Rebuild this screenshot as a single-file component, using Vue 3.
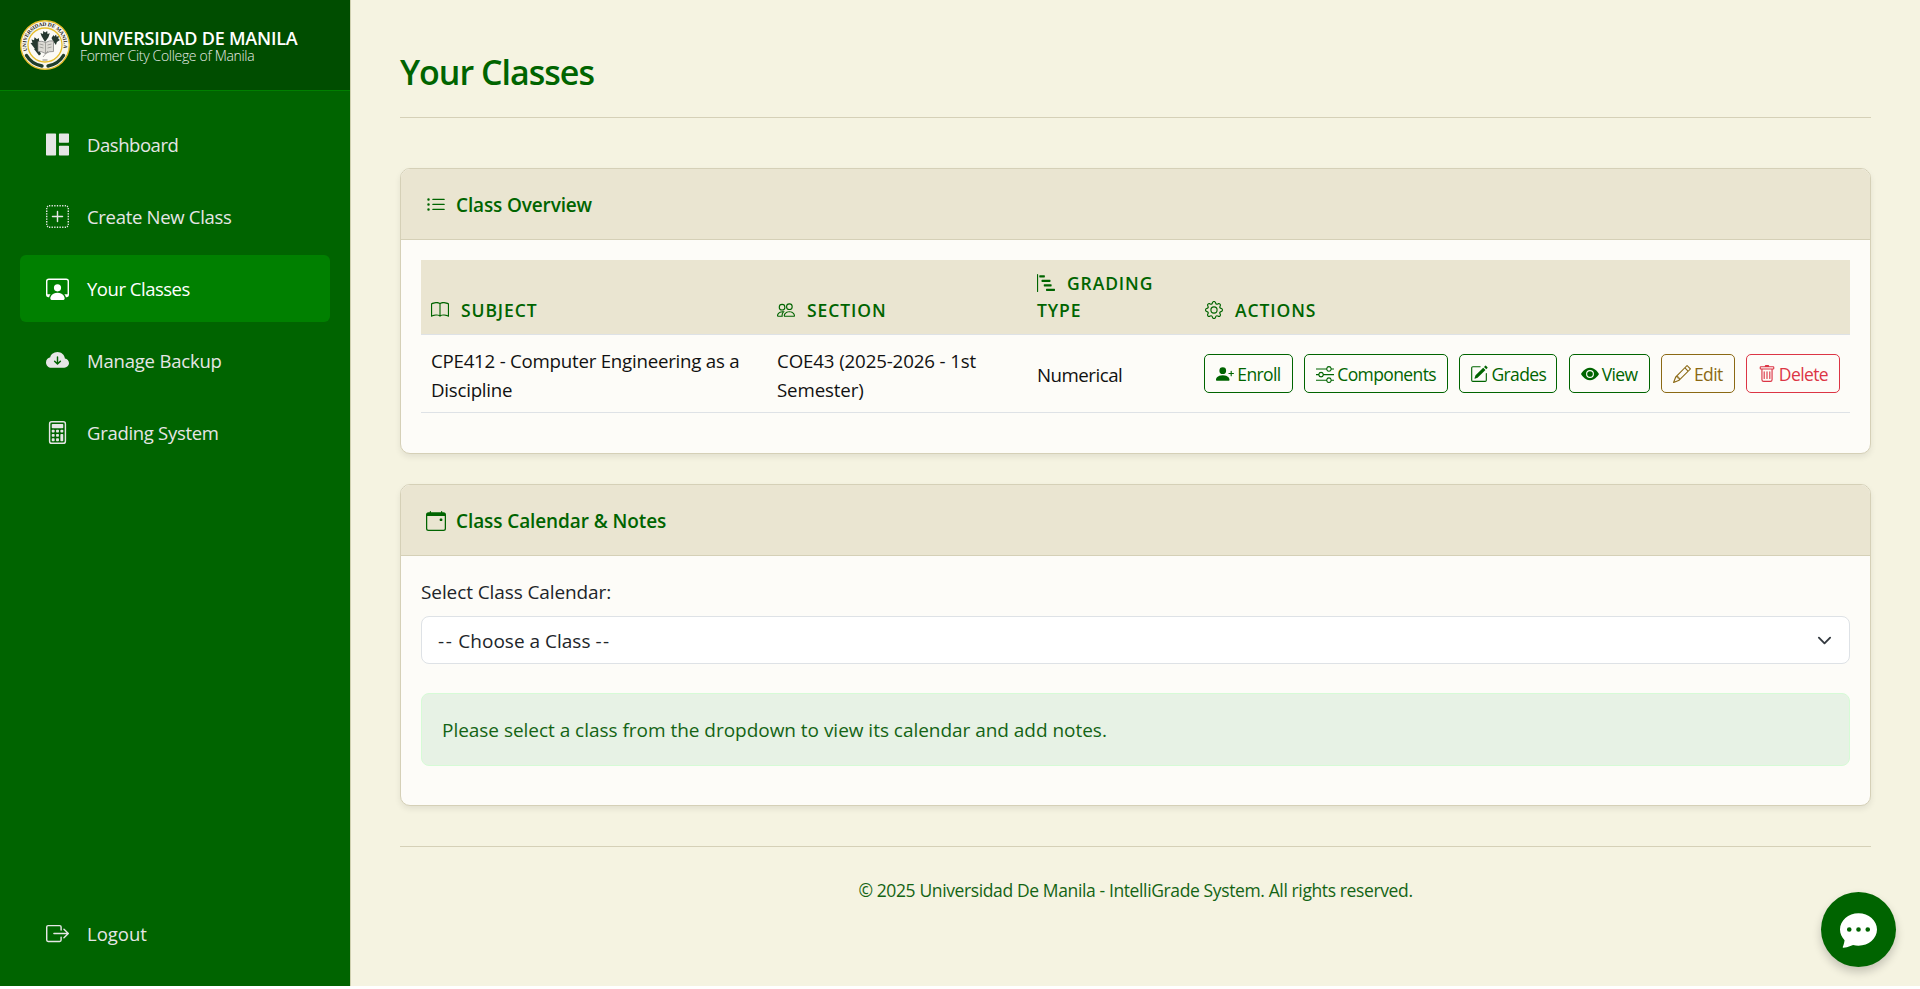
<script setup>
const icons = {
  columns: ['M.5.3h6a.5.5 0 0 1 .5.5v14.4a.5.5 0 0 1-.5.5h-6a.5.5 0 0 1-.5-.5V.8a.5.5 0 0 1 .5-.5M9.500.3h6a.5.5 0 0 1 .5.5v5.500a.5.5 0 0 1-.5.5h-6a.5.5 0 0 1-.5-.5V.8a.5.5 0 0 1 .5-.5M9.500 8.800h6a.5.5 0 0 1 .5.5v5.900a.5.5 0 0 1-.5.5h-6a.5.5 0 0 1-.5-.5V9.300a.5.5 0 0 1 .5-.5'],
  plusDotted: ['M2.5 0q-.25 0-.487.048l.194.98A1.5 1.5 0 0 1 2.5 1h.458V0zm2.292 0h-.917v1h.917zm1.833 0h-.917v1h.917zm1.833 0h-.916v1h.916zm1.834 0h-.917v1h.917zm1.833 0h-.917v1h.917zM13.5 0h-.458v1h.458q.151 0 .293.029l.194-.981A2.5 2.5 0 0 0 13.5 0m2.079 1.11a2.5 2.5 0 0 0-.69-.689l-.556.831q.248.167.415.415l.83-.556zM1.11.421a2.5 2.5 0 0 0-.689.69l.831.556c.11-.164.251-.305.415-.415zM16 2.5q0-.25-.048-.487l-.98.194q.027.141.028.293v.458h1zM.048 2.013A2.5 2.5 0 0 0 0 2.5v.458h1V2.5q0-.151.029-.293zM0 3.875v.917h1v-.917zm16 .917v-.917h-1v.917zM0 5.708v.917h1v-.917zm16 .917v-.917h-1v.917zM0 7.542v.916h1v-.916zm15 .916h1v-.916h-1zM0 9.375v.917h1v-.917zm16 .917v-.917h-1v.917zm-16 .916v.917h1v-.917zm16 .917v-.917h-1v.917zm-16 .917v.458q0 .25.048.487l.98-.194A1.5 1.5 0 0 1 1 13.5v-.458zm16 .458v-.458h-1v.458q0 .151-.029.293l.981.194Q16 13.75 16 13.5M.421 14.89c.183.272.417.506.69.689l.556-.831a1.5 1.5 0 0 1-.415-.415zm14.469.689c.272-.183.506-.417.689-.69l-.831-.556c-.11.164-.251.305-.415.415l.556.83zm-12.877.373Q2.25 16 2.5 16h.458v-1H2.5q-.151 0-.293-.029zM13.5 16q.25 0 .487-.048l-.194-.98A1.5 1.5 0 0 1 13.5 15h-.458v1zm-9.625 0h.917v-1h-.917zm1.833 0h.917v-1h-.917zm1.834-1v1h.916v-1zm1.833 1h.917v-1h-.917zm1.833 0h.917v-1h-.917zM8.5 4.5a.5.5 0 0 0-1 0v3h-3a.5.5 0 0 0 0 1h3v3a.5.5 0 0 0 1 0v-3h3a.5.5 0 0 0 0-1h-3z'],
  workspace: ['M4 16s-1 0-1-1 1-4 5-4 5 3 5 4-1 1-1 1zm4-5.95a2.5 2.5 0 1 0 0-5 2.5 2.5 0 0 0 0 5', 'M2 1a2 2 0 0 0-2 2v9.5A1.5 1.5 0 0 0 1.5 14h.653a5.4 5.4 0 0 1 1.066-2H1V3a1 1 0 0 1 1-1h12a1 1 0 0 1 1 1v9h-2.219c.554.654.89 1.373 1.066 2h.653a1.5 1.5 0 0 0 1.5-1.5V3a2 2 0 0 0-2-2z'],
  cloud: ['M8 2a5.53 5.53 0 0 0-3.594 1.342c-.766.66-1.321 1.52-1.464 2.383C1.266 6.095 0 7.555 0 9.318 0 11.366 1.708 13 3.781 13h8.906C14.502 13 16 11.57 16 9.773c0-1.636-1.242-2.969-2.834-3.194C12.923 3.999 10.69 2 8 2m2.354 6.854-2 2a.5.5 0 0 1-.708 0l-2-2a.5.5 0 1 1 .708-.708L7.5 9.293V5.5a.5.5 0 0 1 1 0v3.793l1.146-1.147a.5.5 0 0 1 .708.708'],
  calculator: ['M12 1a1 1 0 0 1 1 1v12a1 1 0 0 1-1 1H4a1 1 0 0 1-1-1V2a1 1 0 0 1 1-1zM4 0a2 2 0 0 0-2 2v12a2 2 0 0 0 2 2h8a2 2 0 0 0 2-2V2a2 2 0 0 0-2-2z', 'M4 2.5a.5.5 0 0 1 .5-.5h7a.5.5 0 0 1 .5.5v2a.5.5 0 0 1-.5.5h-7a.5.5 0 0 1-.5-.5zm0 4a.5.5 0 0 1 .5-.5h1a.5.5 0 0 1 .5.5v1a.5.5 0 0 1-.5.5h-1a.5.5 0 0 1-.5-.5zm0 3a.5.5 0 0 1 .5-.5h1a.5.5 0 0 1 .5.5v1a.5.5 0 0 1-.5.5h-1a.5.5 0 0 1-.5-.5zm0 3a.5.5 0 0 1 .5-.5h1a.5.5 0 0 1 .5.5v1a.5.5 0 0 1-.5.5h-1a.5.5 0 0 1-.5-.5zm3-6a.5.5 0 0 1 .5-.5h1a.5.5 0 0 1 .5.5v1a.5.5 0 0 1-.5.5h-1a.5.5 0 0 1-.5-.5zm0 3a.5.5 0 0 1 .5-.5h1a.5.5 0 0 1 .5.5v1a.5.5 0 0 1-.5.5h-1a.5.5 0 0 1-.5-.5zm0 3a.5.5 0 0 1 .5-.5h1a.5.5 0 0 1 .5.5v1a.5.5 0 0 1-.5.5h-1a.5.5 0 0 1-.5-.5zm3-6a.5.5 0 0 1 .5-.5h1a.5.5 0 0 1 .5.5v1a.5.5 0 0 1-.5.5h-1a.5.5 0 0 1-.5-.5zm0 3a.5.5 0 0 1 .5-.5h1a.5.5 0 0 1 .5.5v4a.5.5 0 0 1-.5.5h-1a.5.5 0 0 1-.5-.5z'],
  logout: ['M10 12.5a.5.5 0 0 1-.5.5h-8a.5.5 0 0 1-.5-.5v-9a.5.5 0 0 1 .5-.5h8a.5.5 0 0 1 .5.5v2a.5.5 0 0 0 1 0v-2A1.5 1.5 0 0 0 9.5 2h-8A1.5 1.5 0 0 0 0 3.5v9A1.5 1.5 0 0 0 1.5 14h8a1.5 1.5 0 0 0 1.5-1.5v-2a.5.5 0 0 0-1 0z', 'M15.854 8.354a.5.5 0 0 0 0-.708l-3-3a.5.5 0 0 0-.708.708L14.293 7.5H5.5a.5.5 0 0 0 0 1h8.793l-2.147 2.146a.5.5 0 0 0 .708.708z'],
  list: ['M5 11.5a.5.5 0 0 1 .5-.5h9a.5.5 0 0 1 0 1h-9a.5.5 0 0 1-.5-.5m0-4a.5.5 0 0 1 .5-.5h9a.5.5 0 0 1 0 1h-9a.5.5 0 0 1-.5-.5m0-4a.5.5 0 0 1 .5-.5h9a.5.5 0 0 1 0 1h-9a.5.5 0 0 1-.5-.5m-3 1a1 1 0 1 0 0-2 1 1 0 0 0 0 2m0 4a1 1 0 1 0 0-2 1 1 0 0 0 0 2m0 4a1 1 0 1 0 0-2 1 1 0 0 0 0 2'],
  calendar: ['M11 6.5a.5.5 0 0 1 .5-.5h1a.5.5 0 0 1 .5.5v1a.5.5 0 0 1-.5.5h-1a.5.5 0 0 1-.5-.5z', 'M3.5 0a.5.5 0 0 1 .5.5V1h8V.5a.5.5 0 0 1 1 0V1h1a2 2 0 0 1 2 2v11a2 2 0 0 1-2 2H2a2 2 0 0 1-2-2V3a2 2 0 0 1 2-2h1V.5a.5.5 0 0 1 .5-.5M1 4v10a1 1 0 0 0 1 1h12a1 1 0 0 0 1-1V4z'],
  book: ['M1 2.828c.885-.37 2.154-.769 3.388-.893 1.33-.134 2.458.063 3.112.752v9.746c-.935-.53-2.12-.603-3.213-.493-1.18.12-2.37.461-3.287.811zm7.5-.141c.654-.689 1.782-.886 3.112-.752 1.234.124 2.503.523 3.388.893v9.923c-.918-.35-2.107-.692-3.287-.81-1.094-.111-2.278-.039-3.213.492zM8 1.783C7.015.936 5.587.81 4.287.94c-1.514.153-3.042.672-3.994 1.105A.5.5 0 0 0 0 2.5v11a.5.5 0 0 0 .707.455c.882-.4 2.303-.881 3.68-1.02 1.409-.142 2.59.087 3.223.877a.5.5 0 0 0 .78 0c.633-.79 1.814-1.019 3.222-.877 1.378.139 2.8.62 3.681 1.02A.5.5 0 0 0 16 13.5v-11a.5.5 0 0 0-.293-.455c-.952-.433-2.48-.952-3.994-1.105C10.413.809 8.985.936 8 1.783'],
  gear: ['M8 4.754a3.246 3.246 0 1 0 0 6.492 3.246 3.246 0 0 0 0-6.492M5.754 8a2.246 2.246 0 1 1 4.492 0 2.246 2.246 0 0 1-4.492 0', 'M9.796 1.343c-.527-1.79-3.065-1.79-3.592 0l-.094.319a.873.873 0 0 1-1.255.52l-.292-.16c-1.64-.892-3.433.902-2.54 2.541l.159.292a.873.873 0 0 1-.52 1.255l-.319.094c-1.79.527-1.79 3.065 0 3.592l.319.094a.873.873 0 0 1 .52 1.255l-.16.292c-.892 1.64.901 3.434 2.541 2.54l.292-.159a.873.873 0 0 1 1.255.52l.094.319c.527 1.79 3.065 1.79 3.592 0l.094-.319a.873.873 0 0 1 1.255-.52l.292.16c1.64.893 3.434-.902 2.54-2.541l-.159-.292a.873.873 0 0 1 .52-1.255l.319-.094c1.79-.527 1.79-3.065 0-3.592l-.319-.094a.873.873 0 0 1-.52-1.255l.16-.292c.893-1.64-.902-3.433-2.541-2.54l-.292.159a.873.873 0 0 1-1.255-.52zm-2.633.283c.246-.835 1.428-.835 1.674 0l.094.319a1.873 1.873 0 0 0 2.693 1.115l.291-.16c.764-.415 1.6.42 1.184 1.185l-.159.292a1.873 1.873 0 0 0 1.116 2.692l.318.094c.835.246.835 1.428 0 1.674l-.319.094a1.873 1.873 0 0 0-1.115 2.693l.16.291c.415.764-.42 1.6-1.185 1.184l-.291-.159a1.873 1.873 0 0 0-2.693 1.116l-.094.318c-.246.835-1.428.835-1.674 0l-.094-.319a1.873 1.873 0 0 0-2.692-1.115l-.292.16c-.764.415-1.6-.42-1.184-1.185l.159-.291A1.873 1.873 0 0 0 1.945 8.93l-.319-.094c-.835-.246-.835-1.428 0-1.674l.319-.094A1.873 1.873 0 0 0 3.06 4.377l-.16-.292c-.415-.764.42-1.6 1.185-1.184l.292.159a1.873 1.873 0 0 0 2.692-1.115z'],
  enroll: ['M1 14s-1 0-1-1 1-4 6-4 6 3 6 4-1 1-1 1zm5-6a3 3 0 1 0 0-6 3 3 0 0 0 0 6', 'M13.5 5a.5.5 0 0 1 .5.5V7h1.5a.5.5 0 0 1 0 1H14v1.5a.5.5 0 0 1-1 0V8h-1.5a.5.5 0 0 1 0-1H13V5.5a.5.5 0 0 1 .5-.5'],
  sliders: ['M11.5 2a1.5 1.5 0 1 0 0 3 1.5 1.5 0 0 0 0-3M9.05 3a2.5 2.5 0 0 1 4.9 0H16v1h-2.05a2.5 2.5 0 0 1-4.9 0H0V3zM4.5 7a1.5 1.5 0 1 0 0 3 1.5 1.5 0 0 0 0-3M2.05 8a2.5 2.5 0 0 1 4.9 0H16v1H6.95a2.5 2.5 0 0 1-4.9 0H0V8zm9.45 4a1.5 1.5 0 1 0 0 3 1.5 1.5 0 0 0 0-3m-2.45 1a2.5 2.5 0 0 1 4.9 0H16v1h-2.05a2.5 2.5 0 0 1-4.9 0H0v-1z'],
  compose: ['M15.502 1.94a.5.5 0 0 1 0 .706L14.459 3.69l-2-2L13.502.646a.5.5 0 0 1 .707 0l1.293 1.293zm-1.75 2.456-2-2L4.939 9.21a.5.5 0 0 0-.121.196l-.805 2.414a.25.25 0 0 0 .316.316l2.414-.805a.5.5 0 0 0 .196-.12z', 'M1 13.5A1.5 1.5 0 0 0 2.5 15h11a1.5 1.5 0 0 0 1.5-1.5v-6a.5.5 0 0 0-1 0v6a.5.5 0 0 1-.5.5h-11a.5.5 0 0 1-.5-.5v-11a.5.5 0 0 1 .5-.5H9a.5.5 0 0 0 0-1H2.5A1.5 1.5 0 0 0 1 2.5z'],
  eye: ['M10.5 8a2.5 2.5 0 1 1-5 0 2.5 2.5 0 0 1 5 0', 'M0 8s3-5.5 8-5.5S16 8 16 8s-3 5.5-8 5.5S0 8 0 8m8 3.5a3.5 3.5 0 1 0 0-7 3.5 3.5 0 0 0 0 7'],
  pencil: ['M12.146.146a.5.5 0 0 1 .708 0l3 3a.5.5 0 0 1 0 .708l-10 10a.5.5 0 0 1-.168.11l-5 2a.5.5 0 0 1-.65-.65l2-5a.5.5 0 0 1 .11-.168zM11.207 2.5 13.5 4.793 14.793 3.5 12.5 1.207zm1.586 3L10.5 3.207 4 9.707V10h.5a.5.5 0 0 1 .5.5v.5h.5a.5.5 0 0 1 .5.5v.5h.293zm-9.761 5.175-.106.106-1.528 3.821 3.821-1.528.106-.106A.5.5 0 0 1 5 12.5V12h-.5a.5.5 0 0 1-.5-.5V11h-.5a.5.5 0 0 1-.468-.325'],
  trash: ['M5.5 5.5A.5.5 0 0 1 6 6v6a.5.5 0 0 1-1 0V6a.5.5 0 0 1 .5-.5m2.5 0a.5.5 0 0 1 .5.5v6a.5.5 0 0 1-1 0V6a.5.5 0 0 1 .5-.5m3 .5a.5.5 0 0 0-1 0v6a.5.5 0 0 0 1 0z', 'M14.5 3a1 1 0 0 1-1 1H13v9a2 2 0 0 1-2 2H5a2 2 0 0 1-2-2V4h-.5a1 1 0 0 1-1-1V2a1 1 0 0 1 1-1H6a1 1 0 0 1 1-1h2a1 1 0 0 1 1 1h3.500a1 1 0 0 1 1 1zM4.118 4 4 4.059V13a1 1 0 0 0 1 1h6a1 1 0 0 0 1-1V4.059L11.882 4zM2.500 3h11V2h-11z'],
  chat: ['M16 8c0 3.866-3.582 7-8 7a9 9 0 0 1-2.347-.306c-.584.296-1.925.864-4.181 1.234-.2.032-.352-.176-.273-.362.354-.836.674-1.950.770-2.966C.744 11.370 0 9.760 0 8c0-3.866 3.582-7 8-7s8 3.134 8 7M5 8a1 1 0 1 0-2 0 1 1 0 0 0 2 0m4 0a1 1 0 1 0-2 0 1 1 0 0 0 2 0m3 1a1 1 0 1 0 0-2 1 1 0 0 0 0 2'],
  people: ['M15 14s1 0 1-1-1-4-5-4-5 3-5 4 1 1 1 1zm-7.978-1L7 12.996c.001-.264.167-1.030.760-1.720C8.312 10.629 9.282 10 11 10c1.717 0 2.687.630 3.240 1.276.593.690.758 1.457.760 1.720l-.008.002-.014.002zM11 7a2 2 0 1 0 0-4 2 2 0 0 0 0 4m3-2a3 3 0 1 1-6 0 3 3 0 0 1 6 0M6.936 9.280a6 6 0 0 0-1.230-.247A7 7 0 0 0 5 9c-4 0-5 3-5 4q0 1 1 1h4.216A2.240 2.240 0 0 1 5 13c0-1.010.377-2.042 1.090-2.904.243-.294.526-.569.846-.816M4.920 10A5.500 5.500 0 0 0 4 13H1c0-.260.164-1.030.760-1.724.545-.636 1.492-1.256 3.160-1.275ZM1.500 5.500a3 3 0 1 1 6 0 3 3 0 0 1-6 0m3-2a2 2 0 1 0 0 4 2 2 0 0 0 0-4'],
  steps: ['M.5 0a.5.5 0 0 1 .5.5v15a.5.5 0 0 1-1 0V.5A.5.5 0 0 1 .5 0M2 1.500a.5.5 0 0 1 .5-.5h4a.5.5 0 0 1 .5.5v1a.5.5 0 0 1-.5.5h-4a.5.5 0 0 1-.5-.5zm2 4a.5.5 0 0 1 .5-.5h7a.5.5 0 0 1 .5.5v1a.5.5 0 0 1-.5.5h-7a.5.5 0 0 1-.5-.5zm2 4a.5.5 0 0 1 .5-.5h6a.5.5 0 0 1 .5.5v1a.5.5 0 0 1-.5.5h-6a.5.5 0 0 1-.5-.5zm2 4a.5.5 0 0 1 .5-.5h7a.5.5 0 0 1 .5.5v1a.5.5 0 0 1-.5.5h-7a.5.5 0 0 1-.5-.5z'],
}

const nav = [
  { label: 'Dashboard', icon: 'columns', cls: 'n1' },
  { label: 'Create New Class', icon: 'plusDotted', cls: 'n2' },
  { label: 'Your Classes', icon: 'workspace', cls: 'n3', active: true },
  { label: 'Manage Backup', icon: 'cloud', cls: 'n4' },
  { label: 'Grading System', icon: 'calculator', cls: 'n5' },
]
const actions = [
  { label: 'Enroll', icon: 'enroll', cls: 'b-enroll' },
  { label: 'Components', icon: 'sliders', cls: 'b-comp' },
  { label: 'Grades', icon: 'compose', cls: 'b-grades' },
  { label: 'View', icon: 'eye', cls: 'b-view' },
  { label: 'Edit', icon: 'pencil', cls: 'b-edit' },
  { label: 'Delete', icon: 'trash', cls: 'b-delete' },
]
</script>

<template>
  <div class="page">
    <aside class="sidebar">
      <div class="brand">
        <svg class="seal" viewBox="0 0 50 50">
          <defs><path id="seal-arc" d="M7.600 31.500A18.700 18.700 0 1 1 42.400 31.500" /></defs>
          <circle cx="25" cy="25" r="24.300" fill="#f8f6ef" stroke="#e6bd2c" stroke-width="1.400" />
          <circle cx="25" cy="25" r="17" fill="#fbfaf6" stroke="#e6bd2c" stroke-width="1.300" />
          <text class="seal-text"><textPath href="#seal-arc" startOffset="1" textLength="68">UNIVERSIDAD DE MANILA</textPath></text>
          <path d="M6.500 35.500Q11.500 44 22 46" fill="none" stroke="#1f3d2c" stroke-width="3.400" stroke-linecap="round" />
          <path d="M43.500 35.500Q38.500 44 28 46" fill="none" stroke="#1f3d2c" stroke-width="3.400" stroke-linecap="round" />
          <g fill="#26382f">
            <path d="M25 22l-3.500-6-1-3 2.500 1 .2-3 2 1.600 2-1.600.3 3 2.300-.8-1.400 4z" />
            <path d="M18 33l-4.500-6-3-4 2-.2-1-3.300 2.600.8.400-3 2.500 2 1.800-1.400.5 4.500 2 3-2 1z" />
            <path d="M33 21l-1.500-3 2-3 .8 1.600 1.800-2 .5 2.200 2.300-.7-.6 2.700 1.600 1.200-3 2-1 3z" />
            <path d="M14 29l4-1 3 6-2 1.500z" />
          </g>
          <path d="M18 21.500q4-1 7.500 1 4-2.500 8-1.500v10.500q-4-.5-8 2-4-2.500-7.500-2z" fill="#dcdad4" stroke="#777" stroke-width=".7" />
          <path d="M25.500 22.500v11M19.500 24l4 1M19.500 27l4 1M27.500 25l4-1M27.500 28l4-1M28 31l-5 6" stroke="#8a8a85" stroke-width=".7" fill="none" />
          <path d="M22.500 40h5" stroke="#777" stroke-width=".9" />
        </svg>
        <div class="brand-text">
          <span class="brand-name">UNIVERSIDAD DE MANILA</span>
          <span class="brand-sub">Former City College of Manila</span>
        </div>
      </div>
      <nav class="nav">
        <a v-for="n in nav" :key="n.label" class="nav-item" :class="{ active: n.active }">
          <svg class="nav-icon" viewBox="0 0 16 16"><path v-for="d in icons[n.icon]" :key="d" :d="d" /></svg>
          <span :class="n.cls">{{ n.label }}</span>
        </a>
      </nav>
      <a class="nav-item logout">
        <svg class="nav-icon" viewBox="0 0 16 16"><path v-for="d in icons.logout" :key="d" :d="d" /></svg>
        <span class="n6">Logout</span>
      </a>
    </aside>

    <main class="main">
      <header class="page-head"><h1>Your Classes</h1></header>

      <section class="card overview">
        <div class="card-head">
          <svg class="head-icon" viewBox="0 0 16 16"><path v-for="d in icons.list" :key="d" :d="d" /></svg>
          <h2 class="h-over">Class Overview</h2>
        </div>
        <div class="card-body">
          <div class="row thead">
            <div><svg class="th-icon" viewBox="0 0 16 16"><path v-for="d in icons.book" :key="d" :d="d" /></svg>SUBJECT</div>
            <div><svg class="th-icon" viewBox="0 0 16 16"><path v-for="d in icons.people" :key="d" :d="d" /></svg>SECTION</div>
            <div><svg class="th-icon" viewBox="0 0 16 16"><path v-for="d in icons.steps" :key="d" :d="d" /></svg>GRADING<br>TYPE</div>
            <div><svg class="th-icon" viewBox="0 0 16 16"><path v-for="d in icons.gear" :key="d" :d="d" /></svg>ACTIONS</div>
          </div>
          <div class="row tbody">
            <div class="c1">CPE412 - Computer Engineering as a<br>Discipline</div>
            <div class="c2">COE43 (2025-2026 - 1st<br>Semester)</div>
            <div class="c3">Numerical</div>
            <div class="actions">
              <button v-for="a in actions" :key="a.label" :class="['btn', a.cls]">
                <svg class="btn-icon" viewBox="0 0 16 16"><path v-for="d in icons[a.icon]" :key="d" :d="d" fill-rule="evenodd" /></svg>
                <span>{{ a.label }}</span>
              </button>
            </div>
          </div>
        </div>
      </section>

      <section class="card calendar">
        <div class="card-head">
          <svg class="head-icon" viewBox="0 0 16 16"><path v-for="d in icons.calendar" :key="d" :d="d" fill-rule="evenodd" /></svg>
          <h2 class="h-cal">Class Calendar &amp; Notes</h2>
        </div>
        <div class="card-body">
          <label class="label">Select Class Calendar:</label>
          <div class="select">
            <span><span class="dash">--</span> Choose a Class <span class="dash">--</span></span>
            <svg class="chev" viewBox="0 0 16 16"><path d="m2 5 6 6 6-6" /></svg>
          </div>
          <div class="alert"><span>Please select a class from the dropdown to view its calendar and add notes.</span></div>
        </div>
      </section>

      <footer class="footer"><span>© 2025 Universidad De Manila - IntelliGrade System. All rights reserved.</span></footer>
    </main>
    <button class="chat" aria-label="Chat"><svg viewBox="0 0 16 16"><path :d="icons.chat[0]" /></svg></button>
  </div>
</template>

<style>
body { background: #fff; overflow: hidden; }
</style>

<style scoped>
.page, .page * { box-sizing: border-box; }
.page {
  display: flex;
  height: 986px;
  background: #f5f3e1;
  font-family: "Open Sans", "Noto Sans", sans-serif;
  color: #212529;
}
svg { fill: currentColor; flex: none; display: block; }
button { font-family: inherit; }
.sidebar {
  width: 351px;
  flex: none;
  display: flex;
  flex-direction: column;
  background: #006400;
  border-right: 1px solid #cfd0b0;
  color: #e6e6e6;
}
.brand {
  height: 91px;
  display: flex;
  align-items: center;
  gap: 10px;
  padding: 0 20px;
  background: #004d00;
  border-bottom: 1px solid #008000;
}
.seal { width: 50px; height: 50px; }
.seal-text { font: 700 5.400px "Liberation Serif", serif; fill: #222; }
.brand-text { display: flex; flex-direction: column; white-space: nowrap; }
.brand-name { font-size: 18px; font-weight: 600; line-height: 20px; color: #fff; letter-spacing: -0.200px; }
.brand-sub { font-size: 14px; font-weight: 300; line-height: 15px; letter-spacing: -0.320px; color: #e6ece6; }
.nav { padding: 20px; display: flex; flex-direction: column; gap: 5px; }
.nav-item {
  height: 67px;
  display: flex;
  align-items: center;
  gap: 18px;
  padding-left: 26px;
  border-radius: 6px;
  font-size: 18.500px;
  white-space: nowrap;
}
.n1 { letter-spacing: -0.450px; }
.n2 { letter-spacing: -0.300px; }
.n3 { letter-spacing: -0.480px; }
.n4 { letter-spacing: -0.200px; }
.n5 { letter-spacing: -0.300px; }
.nav-item.active { background: #008000; color: #fff; }
.nav-icon { width: 23px; height: 23px; }
.logout { margin: auto 20px 19px; }

.main { flex: 1; padding: 0 49px; }
.page-head { height: 118px; border-bottom: 1px solid #d5d0b7; padding-top: 48px; }
h1, h2 { margin: 0; font-weight: 600; color: #006400; white-space: nowrap; }
h1 { font-size: 34px; line-height: 48px; letter-spacing: -1px; }
.card {
  background: #fdfcf8;
  border: 1px solid #d5d0b7;
  border-radius: 10px;
  box-shadow: 0 3px 6px rgba(0, 0, 0, 0.08);
  overflow: hidden;
}
.overview { margin-top: 50px; height: 286px; }
.calendar { margin-top: 30px; height: 322px; }
.card-head {
  height: 71px;
  display: flex;
  align-items: center;
  gap: 10px;
  padding: 2px 25px 0;
  background: #eae5d1;
  border-bottom: 1px solid #d5d0b7;
  color: #006400;
}
.head-icon { width: 20px; height: 20px; }
h2 { font-size: 19px; line-height: 28px; }
.h-over { letter-spacing: -0.140px; }
.h-cal { letter-spacing: -0.100px; }
.card-body { padding: 20px; }
.row { display: grid; grid-template-columns: 346px 260px 168px 1fr; padding-left: 10px; border-bottom: 1px solid #dee2e6; }
.thead {
  height: 75px;
  align-items: end;
  padding-bottom: 10px;
  background: #eae5d1;
  color: #006400;
  font-size: 17.500px;
  font-weight: 600;
  line-height: 27px;
  letter-spacing: 0.900px;
  white-space: nowrap;
}
.th-icon { width: 18px; height: 18px; display: inline-block; vertical-align: -2px; margin-right: 12px; }
.tbody { height: 78px; align-items: center; font-size: 18.700px; line-height: 29px; color: #111; white-space: nowrap; }
.c1, .c2, .c3 { padding-top: 2px; }
.c1 { letter-spacing: -0.240px; }
.c2 { letter-spacing: -0.130px; }
.c3 { letter-spacing: -0.500px; }
.actions { display: flex; justify-content: space-between; width: 636px; margin-left: -1px; }
.btn {
  height: 39px;
  display: flex;
  align-items: center;
  justify-content: center;
  gap: 3px;
  padding: 0;
  background: none;
  border: 1px solid #006400;
  border-radius: 5px;
  color: #006400;
  font-size: 17.500px;
  letter-spacing: -0.600px;
}
.btn-icon { width: 18px; height: 18px; }
.b-enroll { width: 89px; }
.b-comp { width: 144px; }
.b-grades { width: 98px; }
.b-view { width: 81px; }
.b-edit { width: 74px; color: #8b6914; border-color: #8b6914; }
.b-delete { width: 94px; color: #dc3545; border-color: #dc3545; }
.label { display: block; height: 40px; padding-top: 1px; font-size: 19px; line-height: 30px; letter-spacing: -0.100px; }
.select {
  height: 48px;
  display: flex;
  align-items: center;
  justify-content: space-between;
  padding: 1px 17px 0 16px;
  background: #fff;
  border: 1px solid #dee2e6;
  border-radius: 8px;
  font-size: 19px;
}
.dash { letter-spacing: 1.600px; }
.chev { width: 15px; height: 15px; fill: none; stroke: #343a40; stroke-width: 2; stroke-linecap: round; stroke-linejoin: round; }
.alert {
  margin-top: 29px;
  height: 73px;
  display: flex;
  align-items: center;
  padding-left: 20px;
  background: #e7f2e5;
  border: 1px solid #d6fbd6;
  border-radius: 8px;
  color: #146414;
  font-size: 19px;
  letter-spacing: -0.030px;
}
.footer { margin-top: 40px; border-top: 1px solid #d5d0b7; padding-top: 30px; text-align: center; font-size: 17.500px; line-height: 27px; letter-spacing: -0.380px; color: #146414; }
.chat {
  position: fixed;
  right: 24px;
  top: 892px;
  width: 75px;
  height: 75px;
  display: flex;
  align-items: center;
  justify-content: center;
  border: 0;
  border-radius: 50%;
  background: #006400;
  color: #fff;
  box-shadow: 0 5px 10px rgba(0, 0, 0, 0.2);
}
.chat svg { width: 37px; height: 37px; }
</style>
